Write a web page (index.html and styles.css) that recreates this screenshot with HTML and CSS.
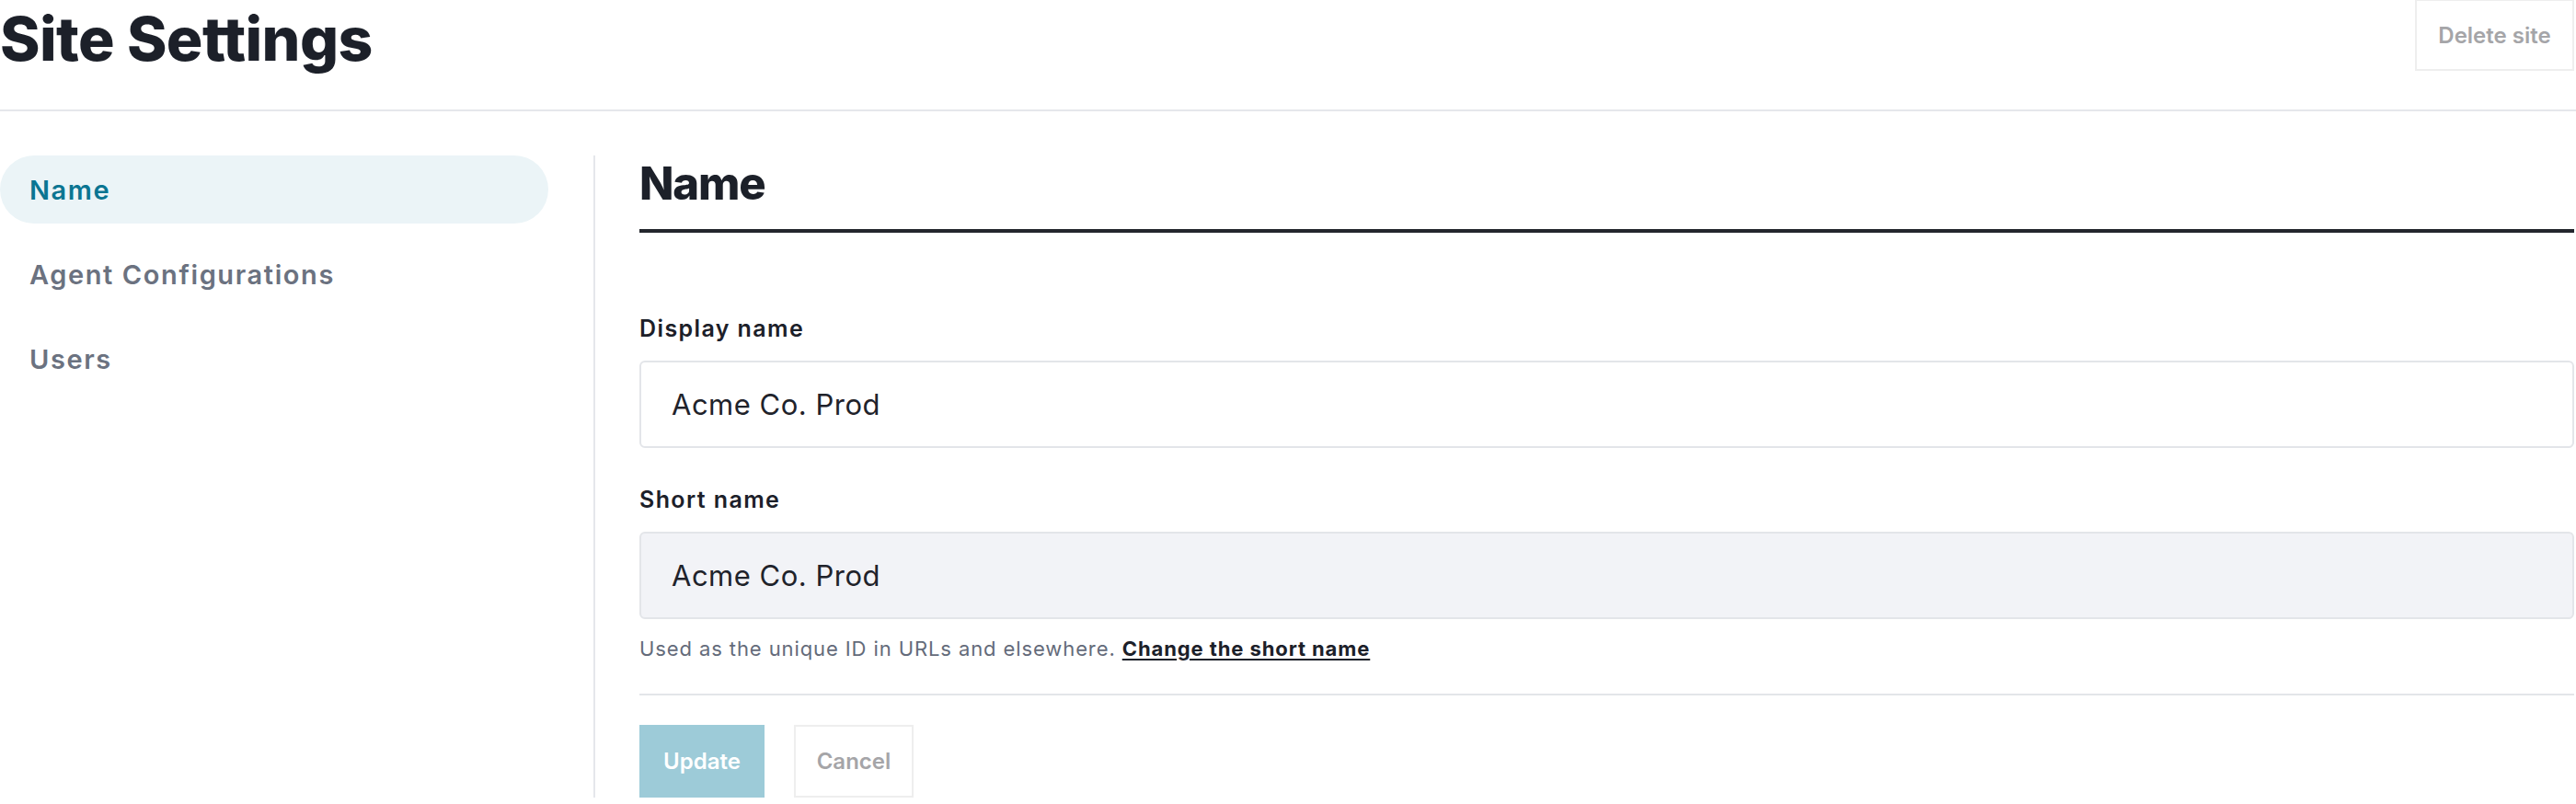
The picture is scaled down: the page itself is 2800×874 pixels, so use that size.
FILE: index.html
```html
<!DOCTYPE html>
<html lang="en">
<head>
<meta charset="utf-8">
<title>Site Settings</title>
<link rel="stylesheet" href="styles.css">
</head>
<body>
<header class="page-header">
  <h1 class="page-title">Site Settings</h1>
  <button class="btn btn-outline btn-delete" type="button">Delete site</button>
</header>
<div class="layout">
  <nav class="sidebar">
    <a class="nav-item active" href="#">Name</a>
    <a class="nav-item" href="#">Agent Configurations</a>
    <a class="nav-item" href="#">Users</a>
  </nav>
  <main class="content">
    <h2 class="section-title">Name</h2>
    <form class="form">
      <label class="field-label first" for="display">Display name</label>
      <div class="input" id="display">Acme Co. Prod</div>
      <label class="field-label" for="short">Short name</label>
      <div class="input input-disabled" id="short">Acme Co. Prod</div>
      <p class="help">Used as the unique ID in URLs and elsewhere. <a class="help-link" href="#">Change the short name</a></p>
      <hr class="divider">
      <div class="actions">
        <button class="btn btn-primary" type="button">Update</button>
        <button class="btn btn-outline btn-cancel" type="button">Cancel</button>
      </div>
    </form>
  </main>
</div>
</body>
</html>
```
FILE: styles.css
```css
* { box-sizing: border-box; }
html, body { margin: 0; padding: 0; background: #ffffff; }
body {
  font-family: Inter, "Noto Sans", "Liberation Sans", sans-serif;
  color: #1c2029;
  width: 2800px;
}
.page-header {
  display: flex;
  justify-content: space-between;
  align-items: flex-start;
  height: 121px;
  padding-right: 2px;
  border-bottom: 2px solid #e5e7eb;
}
.page-title {
  margin: 2px 0 0 0;
  font-size: 66px;
  line-height: 80px;
  font-weight: 800;
  letter-spacing: -0.6px;
  color: #1c2029;
}
.btn {
  font-family: inherit;
  font-weight: 600;
  font-size: 24px;
  cursor: pointer;
  border-radius: 0;
}
.btn-outline {
  background: #ffffff;
  border: 2px solid #eeeeee;
  color: #a5a5a8;
}
.btn-delete {
  width: 173px;
  height: 78px;
  margin-top: -1px;
  padding: 0;
}
.layout {
  display: flex;
  margin-top: 48px;
  height: 698px;
  padding-right: 2px;
}
.sidebar {
  width: 647px;
  flex: none;
  padding-right: 49px;
  border-right: 2px solid #e5e7eb;
  display: flex;
  flex-direction: column;
  gap: 18px;
}
.nav-item {
  display: flex;
  align-items: center;
  height: 74px;
  padding-left: 32px;
  border-radius: 37px;
  font-size: 29px;
  font-weight: 600;
  letter-spacing: 1.6px;
  color: #6b7280;
  text-decoration: none;
}
.nav-item.active {
  background: #ebf4f7;
  color: #0a7592;
}
.content {
  flex: 1;
  padding-left: 48px;
}
.section-title {
  margin: 0;
  font-size: 49px;
  line-height: 59px;
  font-weight: 800;
  letter-spacing: -1.2px;
  padding-top: 1px;
  padding-bottom: 20px;
  border-bottom: 4px solid #23262d;
  color: #1c2029;
}
.form { display: flex; flex-direction: column; }
.field-label {
  display: block;
  font-size: 25px;
  line-height: 30px;
  font-weight: 600;
  letter-spacing: 1.4px;
  color: #1c2029;
  margin-top: 41px;
  margin-bottom: 20px;
}
.field-label.first { margin-top: 89px; }
.input {
  height: 95px;
  border: 2px solid #e3e5e9;
  border-radius: 6px;
  padding-left: 33px;
  display: flex;
  align-items: center;
  font-size: 31px;
  font-weight: 400;
  letter-spacing: 0.5px;
  color: #1f232b;
  background: #ffffff;
}
.input-disabled { background: #f2f3f7; }
.help {
  margin: 19px 0 0 0;
  font-size: 22px;
  line-height: 26px;
  letter-spacing: 0.9px;
  color: #646b7a;
}
.help-link {
  color: #1c2029;
  font-weight: 700;
  text-decoration: underline;
  text-underline-offset: 3px;
}
.divider {
  margin: 36px 0 0 0;
  border: 0;
  border-top: 2px solid #e3e5e9;
  height: 0;
}
.actions {
  display: flex;
  gap: 32px;
  margin-top: 32px;
}
.btn-primary {
  width: 136px;
  height: 79px;
  border: 0;
  background: #9dcbd8;
  color: #ffffff;
  padding: 0;
}
.btn-cancel {
  width: 130px;
  height: 79px;
  padding: 0;
}
```
